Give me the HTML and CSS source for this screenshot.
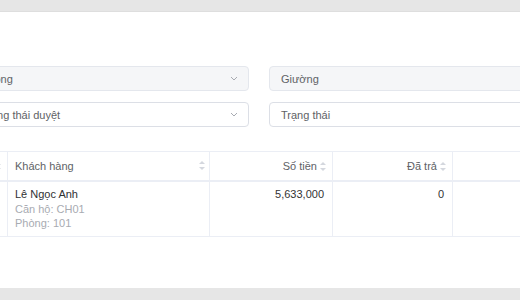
FILE: index.html
```html
<!DOCTYPE html>
<html lang="vi">
<head>
    <meta charset="UTF-8">
    <meta name="viewport" content="width=device-width, initial-scale=1.0">
    <title>Hóa đơn</title>
    <link rel="stylesheet" href="styles.css">
</head>
<body>
    <div class="page">
        <div class="card">
            <div class="filters">
                <div class="select disabled">
                    <span>Phòng</span>
                    <svg class="chevron" width="8" height="5" viewBox="0 0 8 5"><path d="M1 1l3 3 3-3" fill="none" stroke="#a8abb2" stroke-width="1"/></svg>
                </div>
                <div class="select disabled">
                    <span>Giường</span>
                </div>
                <div class="select">
                    <span>Trạng thái duyệt</span>
                    <svg class="chevron" width="8" height="5" viewBox="0 0 8 5"><path d="M1 1l3 3 3-3" fill="none" stroke="#a8abb2" stroke-width="1"/></svg>
                </div>
                <div class="select">
                    <span>Trạng thái</span>
                </div>
            </div>

            <table class="data-table">
                <colgroup>
                    <col class="col-prev">
                    <col class="col-customer">
                    <col class="col-amount">
                    <col class="col-paid">
                    <col class="col-next">
                </colgroup>
                <thead>
                    <tr>
                        <th><span class="sort"></span></th>
                        <th class="left">Khách hàng <span class="sort"></span></th>
                        <th class="right">Số tiền <span class="sort"></span></th>
                        <th class="right">Đã trả <span class="sort"></span></th>
                        <th></th>
                    </tr>
                </thead>
                <tbody>
                    <tr>
                        <td></td>
                        <td class="left">
                            <div class="name">Lê Ngọc Anh</div>
                            <div class="sub">Căn hộ: CH01</div>
                            <div class="sub">Phòng: 101</div>
                        </td>
                        <td class="right">5,633,000</td>
                        <td class="right">0</td>
                        <td></td>
                    </tr>
                </tbody>
            </table>
        </div>
    </div>
</body>
</html>
```

FILE: styles.css
```css
html, body {
    margin: 0;
    padding: 0;
    overflow: hidden;
}

body {
    font-family: "Liberation Sans", Arial, sans-serif;
    background-color: #e6e6e6;
    width: 520px;
    height: 300px;
}

.page {
    padding-top: 11px;
}

.card {
    background-color: #fff;
    height: 277px;
    padding-top: 54px;
    box-sizing: border-box;
    overflow: hidden;
    border-top: 1px solid #dedede;
}

.filters {
    display: grid;
    grid-template-columns: 280px 280px;
    column-gap: 20px;
    row-gap: 11px;
    margin-left: -31px;
}

.select {
    height: 25px;
    box-sizing: border-box;
    border: 1px solid #dcdfe6;
    border-radius: 4px;
    display: flex;
    align-items: center;
    justify-content: space-between;
    padding: 0 10px 0 11px;
    font-size: 11px;
    color: #606266;
    background-color: #fff;
}

.select.disabled {
    background-color: #f5f6f8;
    border-color: #e4e7ed;
}

.chevron {
    display: block;
}

.data-table {
    margin-top: 24px;
    margin-left: -50px;
    border-collapse: collapse;
    table-layout: fixed;
    width: 652px;
    font-size: 11px;
}

.col-prev { width: 57px; }
.col-customer { width: 202px; }
.col-amount { width: 123px; }
.col-paid { width: 120px; }
.col-next { width: 150px; }

.data-table th,
.data-table td {
    border: 1px solid #ebeef5;
}

.data-table tr > :last-child {
    border-right: none;
}

.data-table th {
    height: 28px;
    padding: 0 6px 0 7px;
    font-weight: normal;
    color: #606266;
    text-align: right;
    border-bottom-width: 2px;
}

.data-table th.left {
    text-align: left;
    padding-right: 4px;
}

.data-table th.left .sort {
    float: right;
    margin-top: 1px;
}

.data-table td {
    height: 55px;
    box-sizing: border-box;
    vertical-align: top;
    padding: 5px 8px 0 7px;
    line-height: 14.5px;
    color: #333;
}

.data-table td.right {
    text-align: right;
}

.name {
    color: #303133;
}

.sub {
    color: #a8abb2;
}

.sort {
    display: inline-block;
    position: relative;
    width: 6px;
    height: 9px;
    vertical-align: -1px;
}

.sort::before,
.sort::after {
    content: "";
    position: absolute;
    left: 0;
    border-left: 3px solid transparent;
    border-right: 3px solid transparent;
}

.sort::before {
    top: 0;
    border-bottom: 3.5px solid #d4d7de;
}

.sort::after {
    bottom: 0;
    border-top: 3.5px solid #d4d7de;
}
```
